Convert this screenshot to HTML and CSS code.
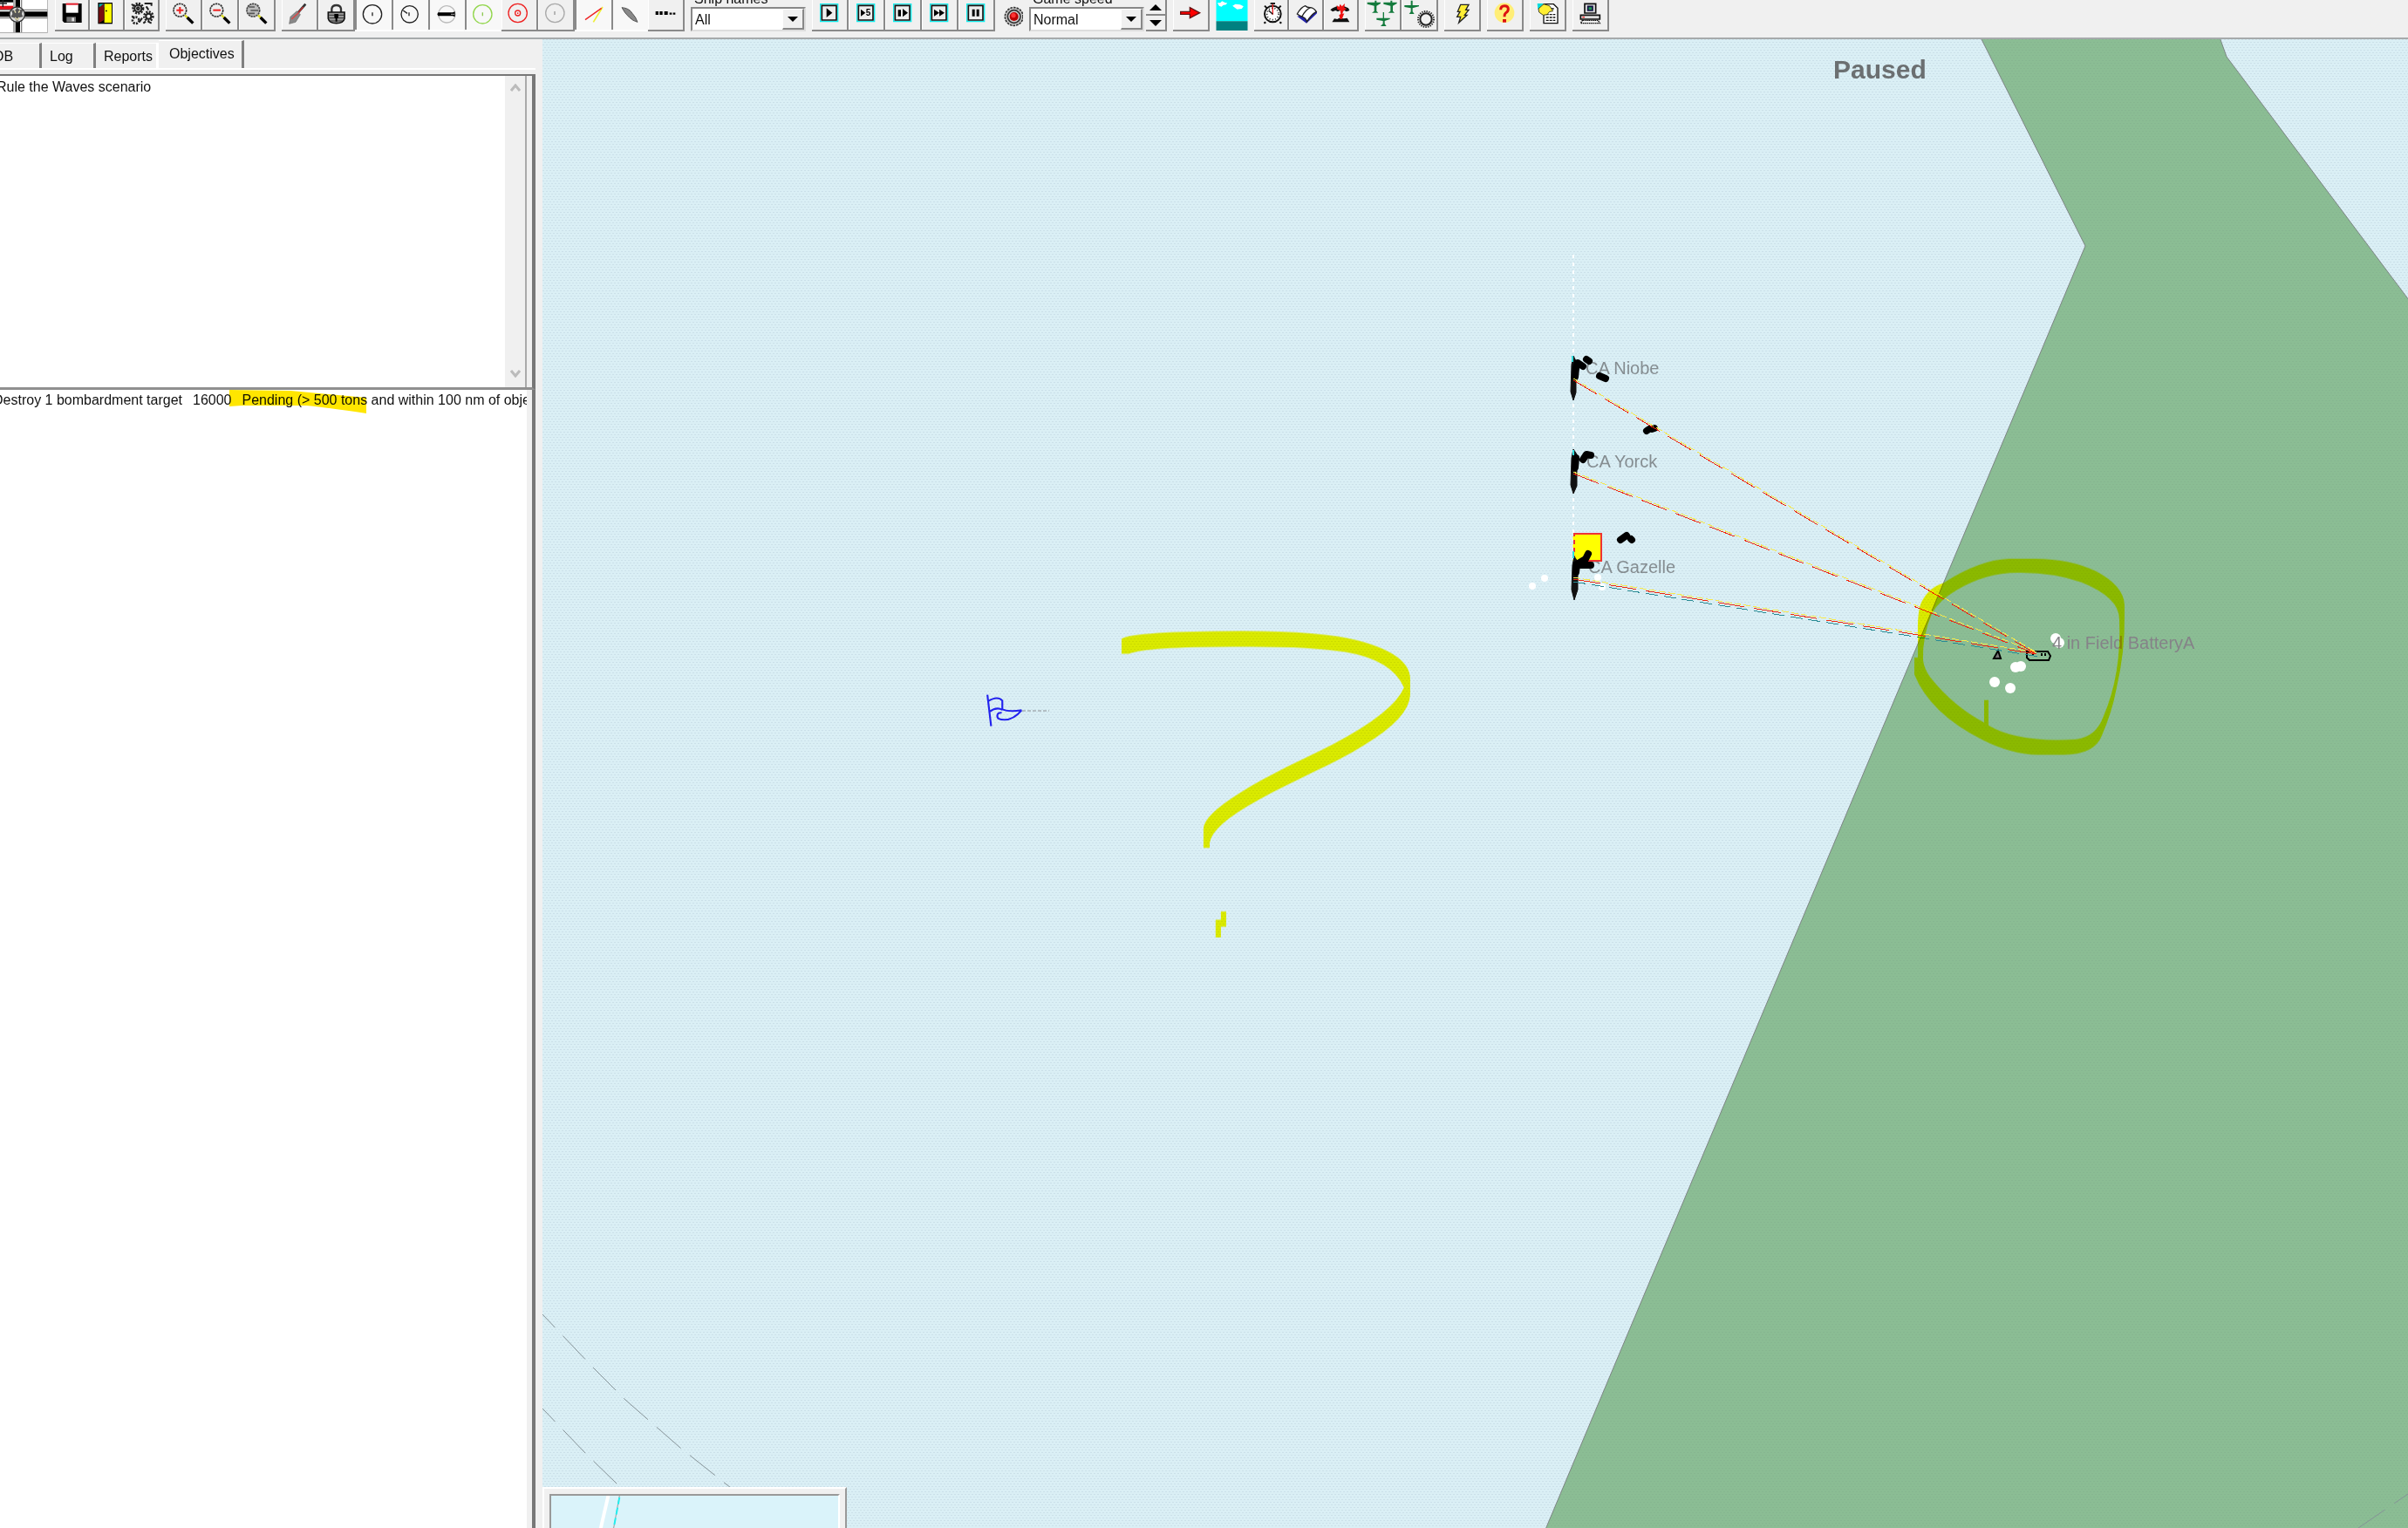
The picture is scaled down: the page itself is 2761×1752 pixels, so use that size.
FILE: index.html
```html
<!DOCTYPE html>
<html lang="en">
<head>
<meta charset="utf-8">
<title>Rule the Waves - Battle</title>
<link rel="stylesheet" href="styles.css">
</head>
<body>
<div class="app">
  <header class="toolbar">
    <svg class="ensign" viewBox="0 0 168 114" aria-hidden="true">
      <path fill="#fff" d="M0 0h164v112H0z"/><path fill="#000" d="M0 0h46v8H0z"/><path fill="#e8101a" d="M0 20h46v14H0z"/><path stroke="#222" stroke-width="4" fill="none" d="M10 0v24M0 12h24"/>
      <path fill="#888" d="M0 32h164v4H0zM0 60h164v4H0zM46 0h4v112h-4zM72 0h4v112h-4z"/><path fill="#000" d="M0 40h164v18H0zM53 0h16v112H53z"/>
      <circle cx="59" cy="50" r="26" fill="#ddd" stroke="#333" stroke-width="4"/><path fill="#555" d="M59 26l8 8 12-2-4 16 4 10-12 2-8 16-8-14-14-4 6-10-4-14 12 2z"/><path stroke="#e8e0b0" stroke-width="4" d="M50 36l4 8M68 36l-4 8M52 60l7 8 7-8" fill="none"/>
      <path fill="#999" d="M0 111h164v2H0zM163 0h2v112h-2z"/>
    </svg>
    <div class="group narrow">
      <button class="tool" aria-label="Save"><svg viewBox="0 0 120 102"><path fill="#000" d="M26 12h66v66H32l-6-6z"/><path fill="#fff" d="M38 14h42v30H38z"/><path fill="#e21c2a" d="M38 11h42v6H38z"/><path fill="#777" d="M40 58h32v18H40z"/><path fill="#ddd" d="M58 61h8v12h-8z"/></svg></button>
      <button class="tool" aria-label="Exit"><svg viewBox="0 0 120 102"><path fill="#000" d="M28 9h50v73H28z"/><path fill="#ff0" d="M50 13h25v65H50z"/><path fill="#0aa" d="M32 13h18v12H32z"/><path fill="#7a1010" d="M31 26l18-14v56l-18 12z"/><path fill="#000" d="M54 35h5v5h-5z"/></svg></button>
      <button class="tool" aria-label="Settings"><svg viewBox="0 0 120 102"><g fill="none" stroke="#222" stroke-width="8" stroke-dasharray="6 4"><circle cx="46" cy="29" r="17"/><circle cx="82" cy="56" r="15"/><circle cx="38" cy="70" r="11"/></g><g fill="none" stroke="#222" stroke-width="6"><circle cx="46" cy="29" r="12"/><circle cx="82" cy="56" r="9"/><circle cx="46" cy="29" r="4"/><path d="M24 14l8 8M68 12h24v8M74 22l8 12M50 76l10-14M64 80l8-6M80 74l12 6M24 56l10 4"/></g></svg></button>
    </div>
    <div class="group">
      <button class="tool" aria-label="Zoom in"><svg viewBox="0 0 120 102"><circle cx="49" cy="35" r="22" fill="#eee" stroke="#333" stroke-width="5" stroke-dasharray="7 2"/><path stroke="#e22" stroke-width="6" d="M37 35h24M49 24v23"/><path stroke="#dd2" stroke-width="7" d="M66 52l10 10"/><path stroke="#000" stroke-width="10" d="M74 60l20 20"/></svg></button>
      <button class="tool" aria-label="Zoom out"><svg viewBox="0 0 120 102"><circle cx="49" cy="35" r="22" fill="#eee" stroke="#333" stroke-width="5" stroke-dasharray="7 2"/><path stroke="#e22" stroke-width="6" d="M37 35h26"/><path stroke="#dd2" stroke-width="7" d="M66 52l10 10"/><path stroke="#000" stroke-width="10" d="M74 60l20 20"/></svg></button>
      <button class="tool" aria-label="Zoom to fleet"><svg viewBox="0 0 120 102"><circle cx="49" cy="35" r="22" fill="#bbb" stroke="#444" stroke-width="5" stroke-dasharray="7 2"/><path stroke="#555" stroke-width="5" d="M34 24h20M40 36h26M34 46h20"/><path stroke="#dd2" stroke-width="7" d="M66 52l10 10"/><path stroke="#000" stroke-width="10" d="M74 60l20 20"/></svg></button>
    </div>
    <div class="group">
      <button class="tool" aria-label="Clear"><svg viewBox="0 0 120 102"><path stroke="#333" stroke-width="8" d="M82 14L56 44"/><path stroke="#c33" stroke-width="4" d="M74 24L44 58"/><path fill="#888" stroke="#666" stroke-width="2" d="M52 38l12 12-16 26-22 6 4-24z"/><path stroke="#d44" stroke-width="4" d="M58 44L34 66"/></svg></button>
      <button class="tool" aria-label="Lock"><svg viewBox="0 0 120 102"><path fill="none" stroke="#333" stroke-width="7" d="M46 44V30q2-12 16-12t16 12v14"/><path fill="#999" stroke="#111" stroke-width="5" d="M34 42h56v22q-4 16-28 16T34 64z"/><path stroke="#333" stroke-width="3" d="M37 52h50M37 62h50M41 72h42"/><path fill="#000" d="M55 48h14v12l-4 4v10h-6V64l-4-4z"/></svg></button>
      <button class="tool on" aria-label="Range circle"><svg viewBox="0 0 120 102"><circle cx="60" cy="49" r="32" fill="none" stroke="#222" stroke-width="4"/><path stroke="#222" stroke-width="4" d="M60 43v12"/></svg></button>
      <button class="tool on" aria-label="Bearing circle"><svg viewBox="0 0 120 102"><circle cx="62" cy="49" r="29" fill="none" stroke="#222" stroke-width="4"/><path stroke="#222" stroke-width="4" d="M60 43v12M40 36l14 10" fill="none"/></svg></button>
      <button class="tool on" aria-label="Ship symbols"><svg viewBox="0 0 120 102"><circle cx="64" cy="49" r="29" fill="none" stroke="#bbb" stroke-width="4"/><path fill="#000" d="M34 43h50l8-3v18l-8-3H34l-3-6z"/><path stroke="#fff" stroke-width="2" d="M78 49h12"/></svg></button>
      <button class="tool on" aria-label="Sighting range"><svg viewBox="0 0 120 102"><circle cx="61" cy="49" r="32" fill="none" stroke="#92d64c" stroke-width="4"/><path stroke="#8cc850" stroke-width="4" d="M61 43v12"/></svg></button>
      <button class="tool" aria-label="Gun range"><svg viewBox="0 0 120 102"><circle cx="56" cy="45" r="32" fill="none" stroke="#e22" stroke-width="4"/><circle cx="56" cy="45" r="9" fill="none" stroke="#e22" stroke-width="4"/><path fill="#e22" d="M54 43h4v5h-4z"/></svg></button>
      <button class="tool" aria-label="Torpedo range"><svg viewBox="0 0 120 102"><circle cx="58" cy="45" r="32" fill="none" stroke="#aaa" stroke-width="4"/><path stroke="#999" stroke-width="4" d="M57 39v12"/></svg></button>
      <button class="tool on" aria-label="Fire lines"><svg viewBox="0 0 120 102"><path stroke="#ee3" stroke-width="5" d="M96 24L64 76"/><path stroke="#e22" stroke-width="4" d="M36 68L92 28"/></svg></button>
      <button class="tool on" aria-label="Torpedo"><svg viewBox="0 0 120 102"><path fill="#888" stroke="#555" stroke-width="3" d="M36 26q26 2 36 20 12 12 18 30-16-4-28-16-16-14-26-34z"/></svg></button>
      <button class="tool" aria-label="Formation"><svg viewBox="0 0 120 102"><path stroke="#000" stroke-width="12" d="M26 45h10M40 45h10M56 45h12"/><path stroke="#000" stroke-width="7" d="M74 47h8M86 47h8"/></svg></button>
    </div>
    <div class="field">
      <label for="names">Ship names</label>
      <div class="combo"><select id="names"><option>All</option></select><span class="drop"></span></div>
    </div>
    <div class="group">
      <button class="tool" aria-label="One turn"><svg viewBox="0 0 120 102"><path fill="#eee" stroke="#1ee" stroke-width="4" d="M29 14h60v60H29z"/><path fill="none" stroke="#111" stroke-width="5" d="M34 19h50v50H34z"/><path fill="#000" d="M50 28l20 16-20 16z"/></svg></button>
      <button class="tool" aria-label="Five turns"><svg viewBox="0 0 120 102"><path fill="#eee" stroke="#1ee" stroke-width="4" d="M29 14h60v60H29z"/><path fill="none" stroke="#111" stroke-width="5" d="M34 19h50v50H34z"/><path fill="#000" d="M42 32l16 12-16 12z"/><text x="59" y="55" class="five">5</text></svg></button>
      <button class="tool" aria-label="Step"><svg viewBox="0 0 120 102"><path fill="#eee" stroke="#1ee" stroke-width="4" d="M29 14h60v60H29z"/><path fill="none" stroke="#111" stroke-width="5" d="M34 19h50v50H34z"/><path fill="#000" d="M44 34h10v22H44zM60 30l18 14-18 14z"/></svg></button>
      <button class="tool" aria-label="Fast forward"><svg viewBox="0 0 120 102"><path fill="#eee" stroke="#1ee" stroke-width="4" d="M29 14h60v60H29z"/><path fill="none" stroke="#111" stroke-width="5" d="M34 19h50v50H34z"/><path fill="#000" d="M42 32l18 12-18 12zM60 32l18 12-18 12z"/></svg></button>
      <button class="tool" aria-label="Pause"><svg viewBox="0 0 120 102"><path fill="#eee" stroke="#1ee" stroke-width="4" d="M29 14h60v60H29z"/><path fill="none" stroke="#111" stroke-width="5" d="M34 19h50v50H34z"/><path fill="#000" d="M47 32h9v24h-9zM62 32h9v24h-9z"/></svg></button>
    </div>
    <svg class="lamp" viewBox="0 0 75 102" aria-hidden="true"><circle cx="44" cy="57" r="31" fill="#ccc" stroke="#333" stroke-width="5" stroke-dasharray="8 3"/><circle cx="44" cy="57" r="22" fill="none" stroke="#333" stroke-width="5"/><circle cx="44" cy="57" r="15" fill="#b00"/><circle cx="42" cy="53" r="8" fill="#f33"/></svg>
    <div class="speed">
      <div class="field">
        <label for="speed">Game speed</label>
        <div class="combo"><select id="speed"><option>Normal</option></select><span class="drop"></span></div>
      </div>
      <div class="spin"><button class="up" aria-label="Faster"></button><button class="down" aria-label="Slower"></button></div>
    </div>
    <div class="group">
      <button class="tool" aria-label="Go"><svg viewBox="0 0 120 102"><path fill="#f00" stroke="#611" stroke-width="4" d="M26 40h32V26l34 18-34 18V49H26z"/></svg></button>
    </div>
    <svg class="sky" viewBox="0 0 108 105" aria-hidden="true"><path fill="#0ff" d="M0 0h108v73H0z"/><path fill="#008080" d="M0 73h108v32H0z"/><path fill="#fff" d="M4 10h10l6-6 12 6h6l-4 6-10 2-6 5-8-3zM56 20l10-6 16 2 12 6-6 8-16 2z"/></svg>
    <div class="group narrow">
      <button class="tool" aria-label="Time"><svg viewBox="0 0 120 102"><circle cx="64" cy="48" r="28" fill="#fff" stroke="#111" stroke-width="6"/><circle cx="64" cy="48" r="20" fill="none" stroke="#111" stroke-width="5" stroke-dasharray="3 7"/><path stroke="#111" stroke-width="6" d="M56 12h16M36 20l8 8M92 20l-8 8M40 76l-6 4M88 76l6 4"/><path stroke="#e22" stroke-width="4" d="M64 14v36"/><path stroke="#111" stroke-width="4" d="M64 49L50 36"/></svg></button>
      <button class="tool" aria-label="Log book"><svg viewBox="0 0 120 102"><path fill="#22a" d="M28 56l32 24 36-34v-6z"/><path fill="#fff" stroke="#222" stroke-width="4" d="M28 48q14-24 28-28 6 6 16 6 12 0 22 14-18 10-32 34-6-14-16-16-10-4-18-10zM44 58q12-24 30-32"/></svg></button>
      <button class="tool" aria-label="Damage"><svg viewBox="0 0 120 102"><path fill="#111" d="M22 34l8-6 14-6 12 4 14-4 14 6 4 8-10 4-8-4-8 4-6-4-8 4-8-4-10 4zM28 76l8-12 10 2 6-4 16 2 12-2 8 14z"/><path fill="#e11" d="M44 18l8 6 4-10 6 8 10-10-2 14 8 4-12 8-2 10 6-2-8 20h-6l-4-14 6-4-2-12-10-4z"/></svg></button>
    </div>
    <div class="group">
      <button class="tool" aria-label="Air group"><svg viewBox="0 0 120 102"><path fill="#137a3c" d="M8 8h26V2h6v6h14v4L40 20v18l6 6H24l8-6V20L8 14zM64 8h24V2h6v6h16v4L96 20v18l6 6H80l8-6V20L64 14zM40 62h22V42h4v20h20v4L68 72v10l6 8H54l8-8V72L40 68z"/></svg></button>
      <button class="tool" aria-label="Air settings"><svg viewBox="0 0 120 102"><path fill="#137a3c" d="M10 18h22V2h6v16h22v4L38 28v12l6 8H26l6-8V28L10 24z"/><circle cx="84" cy="66" r="20" fill="none" stroke="#222" stroke-width="6"/><circle cx="84" cy="66" r="27" fill="none" stroke="#222" stroke-width="6" stroke-dasharray="4 4"/></svg></button>
    </div>
    <div class="group"><button class="tool" aria-label="Quick"><svg viewBox="0 0 120 102"><path fill="#fe3" stroke="#222" stroke-width="4" d="M56 16h28L74 34h10L70 52h8L50 78l6-20H44l10-18H46z"/></svg></button></div>
    <div class="group"><button class="tool" aria-label="Help"><svg viewBox="0 0 120 102"><circle cx="60" cy="44" r="34" fill="#fe7"/><path fill="none" stroke="#d11" stroke-width="9" d="M47 34q0-14 13-14t13 11q0 9-9 14-4 3-4 13"/><path fill="#d11" d="M54 66h12v11H54z"/></svg></button></div>
    <div class="group"><button class="tool" aria-label="Orders"><svg viewBox="0 0 120 102"><path fill="#fff" stroke="#111" stroke-width="4" d="M48 14h34l14 14v52H48z"/><path stroke="#111" stroke-width="4" d="M56 50h32M56 60h32M56 70h32M74 30h10" stroke-dasharray="9 3"/><path fill="#0dd" d="M26 12h22L28 32z"/><path fill="#fe3" stroke="#442" stroke-width="3" d="M30 30l18-16 20 6 12 18-12 2-8 10-14 2-14-10z"/></svg></button></div>
    <div class="group"><button class="tool" aria-label="Computer"><svg viewBox="0 0 120 102"><path fill="#ddd" stroke="#111" stroke-width="5" d="M42 13h38v32H42zM28 52h66v14H28z"/><path fill="#295" stroke="#114" stroke-width="5" d="M53 22h16v14H53z"/><path fill="#e22" d="M34 57h8v4h-8z"/><path fill="#eee" stroke="#111" stroke-width="4" d="M34 70h54l6 10H28z" stroke-dasharray="5 2"/></svg></button></div>
  </header>

  <main class="work">
    <aside class="side">
      <nav class="tabs">
        <button class="tab cut">OB</button>
        <button class="tab log">Log</button>
        <button class="tab reports">Reports</button>
        <button class="tab active">Objectives</button>
      </nav>
      <section class="memo">
        <p class="memo-text">Rule the Waves scenario</p>
        <div class="scroll">
          <svg viewBox="0 0 12 10"><path d="M1 8l5-6 5 6"/></svg>
          <svg viewBox="0 0 12 10"><path d="M1 2l5 6 5-6"/></svg>
        </div>
      </section>
      <section class="goals">
        <p class="goal"><span>Destroy 1 bombardment target</span><span>16000</span><span>Pending (&gt; 500 tons and within 100 nm of objectives)</span></p>
        <svg class="marker" viewBox="0 0 158 28"><path d="M0 0L70 1 157 9V27Q110 20 88 18H14L0 19z"/></svg>
      </section>
    </aside>

    <section class="map">
      <svg class="chart" viewBox="622 45 2139 1707" preserveAspectRatio="xMinYMin slice">
        <defs>
          <pattern id="sea" width="4" height="6" patternUnits="userSpaceOnUse"><rect width="4" height="6" fill="#daeff5"/><path fill="#cbe0e9" d="M0 0h2v1H0zM2 3h2v1H2z"/></pattern>
          <pattern id="land" width="4" height="6" patternUnits="userSpaceOnUse"><rect width="4" height="6" fill="#8bbd94"/><path fill="#86b690" d="M0 0h2v1H0zM2 3h2v1H2z"/></pattern>
        </defs>
        <rect x="622" y="45" width="2139" height="1707" fill="url(#sea)"/>
        <path class="coast" fill="url(#land)" d="M2272 40V45L2391 282 1771 1756H2765V348L2553 65 2544 40z"/>
        <g class="route">
          <path stroke-dashoffset="16" d="M622 1507L680 1568 717 1605 780 1660 838 1706"/>
          <path stroke-dashoffset="16" d="M622 1615L672 1667 708 1702"/>
          <path d="M2704 1752L2761 1713"/>
        </g>

        <path class="wake" d="M1804 292V630"/>
        <g class="label">
          <text x="1818" y="429">CA Niobe</text>
          <text x="1819" y="536">CA Yorck</text>
          <text x="1821" y="657">CA Gazelle</text>
        </g>
        <path fill="#ff0" stroke="#e33" stroke-width="2" d="M1805 612h31v31h-31z"/>
        <path stroke="#ff0" stroke-width="3" stroke-dasharray="4 5" d="M1805 615v28"/>
        <g class="hull">
          <path d="M1802 418l2-10 3 6v36l-3 9-3-10z"/><path d="M1802 525l2-10 4 6v36l-4 9-3-10z"/><path d="M1803 648l2-10 4 6v32l-4 12-3-12z"/>
        </g>
        <g class="smoke">
          <path d="M1806 432l1-10 2-6 6 4M1819 412l3 2M1834 431l7 3M1888 494l3-2M1894 492l3-1"/>
          <path d="M1806 536l1-11M1815 527l4-6 5 1"/>
          <path d="M1807 656l1-9 10-6 3-6M1810 648l14 0M1858 619l7-5M1870 618l1 1"/>
        </g>
        <path stroke="#3dd" stroke-width="2" d="M1803 408v7M1804 516v6M1804 632v8"/>
        <g class="splash">
          <circle cx="1757" cy="672" r="4"/><circle cx="1771" cy="663" r="4"/><circle cx="1832" cy="662" r="4"/><circle cx="1837" cy="673" r="4"/>
          <circle cx="2357" cy="732" r="6"/><circle cx="2361" cy="737" r="6"/><circle cx="2311" cy="765" r="6"/><circle cx="2317" cy="764" r="6"/><circle cx="2287" cy="782" r="6"/><circle cx="2305" cy="789" r="6"/>
        </g>
        <path class="battery" d="M2324 747h24l3 5-2 5h-22l-3-3z"/><path stroke="#000" stroke-width="2" d="M2331 749v3M2341 749v3M2345 749v3"/>
        <path fill="#777" stroke="#000" stroke-width="2" d="M2291 746l3 9h-8z"/>
        <g class="label"><text class="foe" x="2353" y="744">4 in Field BatteryA</text></g>
        <g class="fire">
          <path class="teal" d="M1804 667L2338 753"/>
          <path class="gold" d="M1804 434L2335 748M1804 541L2335 748M1804 662L2335 748"/>
          <path class="red" d="M1804 436L2335 750M1804 543L2335 750M1804 664L2335 750"/>
        </g>

        <g class="ink">
          <path transform="translate(2160 600) scale(.3333)" fill-rule="evenodd" d="M205 205Q330 125 430 122H520Q640 122 730 165 825 215 828 280V320Q830 440 800 570 785 650 750 730 725 795 620 796H530Q440 795 340 745 160 655 105 520V462H117V380Q115 300 130 270 155 220 205 205ZM135 470Q132 390 165 310 190 265 250 230 350 170 460 170 580 168 680 203 810 255 810 330 818 520 755 665 730 735 660 743 460 755 360 695V608H345V685Q240 630 160 530 138 500 135 470Z"/>
          <path transform="translate(1100 700) scale(.357 .3333)" d="M521 97Q560 72 900 71 1160 70 1280 103 1447 150 1448 235V290Q1445 370 1300 463C1200 530 1080 580 960 652Q810 740 804 800V816H784V750Q785 705 900 628C1000 560 1100 515 1200 460Q1395 350 1428 265 1390 170 1240 143 1120 122 880 125 600 125 545 149H521ZM840 1035H857V1088H840V1125H823V1064H840Z"/>
        </g>
        <path class="trail" d="M1172 815h31"/>
        <path class="flag" transform="translate(1100 700) scale(.357 .3333)" d="M90 290L102 398M93 312Q122 292 138 310V340Q160 350 200 343M97 348Q120 330 138 342M200 343Q175 375 145 376 120 376 122 362 122 350 136 352"/>
        <text class="state" x="2102" y="90">Paused</text>
      </svg>
      <div class="overview"><svg viewBox="0 0 332 39" preserveAspectRatio="xMinYMin slice"><path stroke="#fff" stroke-width="4" d="M66 0L57 39"/><path stroke="#999" stroke-width="1" d="M79 0L72 39"/><path stroke="#2ee" stroke-width="2" stroke-dasharray="8 4" d="M79 2L72 39"/></svg></div>
    </section>
  </main>
</div>
</body>
</html>
```
FILE: styles.css
```css
* { box-sizing: border-box; }
body { margin: 0; background: #f0f0f0; color: #111; font: 16px/18px "Liberation Sans", Arial, sans-serif; }
button { font: inherit; color: inherit; padding: 0; border: 0; background: #f0f0f0; }
.app { display: flex; flex-direction: column; height: 100vh; overflow: hidden; }

.toolbar { display: flex; align-items: flex-start; gap: 7px; height: 45px; flex: none; border-bottom: 2px solid #a6aaab; overflow: hidden; }
.toolbar > * { flex: none; }
.ensign { width: 56px; height: 38px; }
.group { display: flex; }
.tool { width: 42px; height: 36px; border-right: 2px solid #8a8a8a; border-bottom: 2px solid #8a8a8a; box-shadow: inset 1px 0 #fff; }
.narrow .tool { width: 40px; }
.tool svg { display: block; width: 40px; height: 34px; overflow: visible; fill: none; }
.tool.on { background: #f8f8f8; border-right-color: #f8f8f8; border-bottom-color: #fff; box-shadow: inset 2px 0 #8a8a8a; }
.five { font: bold 30px "Liberation Sans", Arial, sans-serif; fill: #000; }

.field { width: 132px; }
.field label { display: block; margin: -10px 0 0 4px; height: 18px; line-height: 18px; }
.combo { display: flex; height: 28px; background: #fff; border: 2px solid #888; border-right-color: #ddd; border-bottom-color: #ddd; }
.combo select { flex: 1; min-width: 0; appearance: none; border: 0; background: #fff; font: inherit; color: inherit; padding: 2px 0 0 3px; }
.drop { width: 25px; display: grid; place-items: center; background: #f0f0f0; border: 1px solid #fff; border-right: 2px solid #888; border-bottom: 2px solid #888; }
.drop::after { content: ""; border: 6px solid transparent; border-top-color: #000; border-bottom: 0; }
.lamp { width: 25px; height: 34px; }
.speed { display: flex; gap: 2px; }
.spin { display: flex; flex-direction: column; width: 24px; height: 36px; }
.spin button { height: 18px; display: flex; align-items: center; justify-content: center; border-right: 2px solid #888; border-bottom: 2px solid #888; }
.spin button::after { content: ""; width: 0; height: 0; border-left: 7px solid transparent; border-right: 7px solid transparent; }
.spin .up::after { border-bottom: 7px solid #000; }
.spin .down::after { border-top: 7px solid #000; }
.sky { width: 37px; height: 35px; }

.work { display: flex; flex: 1; min-height: 0; }
.side { display: flex; flex-direction: column; width: 622px; flex: none; border-right: 8px solid #f0f0f0; }
.tabs { display: flex; align-items: flex-end; height: 35px; border-bottom: 2px solid #fff; }
.tab { height: 29px; padding-top: 1px; text-align: left; border-right: 3px solid #808080; border-top: 1px solid #fff; }
.cut { width: 48px; text-indent: -8px; }
.log { width: 62px; padding-left: 9px; }
.reports { width: 72px; padding-left: 9px; border-right-color: #fff; }
.tab.active { width: 98px; height: 32px; padding: 0 0 2px 12px; }
.memo { display: flex; height: 362px; margin-top: 5px; background: #fff; border-top: 2px solid #777; border-bottom: 3px solid #909090; border-right: 4px solid #777; box-shadow: inset -6px 0 #f0f0f0, inset -8px 0 #aaa; }
.memo-text { flex: 1; margin: 4px 0 0 -4px; }
.scroll { width: 23px; margin-right: 8px; background: #f0f0f0; display: flex; flex-direction: column; justify-content: space-between; align-items: center; padding: 9px 0 11px; }
.scroll svg { width: 12px; height: 10px; fill: none; stroke: #bbb; stroke-width: 3; }
.goals { position: relative; flex: 1; background: #fff; border-right: 4px solid #777; box-shadow: inset -6px 0 #f0f0f0; }
.goal { display: flex; gap: 12px; margin: 0 6px 0 -8px; padding-top: 3px; white-space: nowrap; overflow: hidden; }
.marker { position: absolute; left: 263px; top: 0; width: 158px; height: 28px; fill: #ffe600; mix-blend-mode: multiply; }

.map { position: relative; flex: 1; min-width: 0; overflow: hidden; background: #d9edf4; }
.chart { display: block; width: 100%; height: 100%; }
.coast { stroke: #7d8584; stroke-width: 1; }
.route { fill: none; stroke: #859297; stroke-width: 1; stroke-dasharray: 37 13; }
.wake { stroke: #fff; stroke-width: 2; stroke-dasharray: 4 5; }
.label { font-size: 20px; fill: #858d91; }
.foe { fill: #858388; }
.hull { fill: #111; stroke: #111; }
.smoke { fill: none; stroke: #000; stroke-width: 8; stroke-linecap: round; stroke-linejoin: round; }
.splash { fill: #fff; }
.battery { fill: none; stroke: #000; stroke-width: 2; }
.fire { fill: none; stroke-width: 2; shape-rendering: crispEdges; }
.gold { stroke: #f7e84a; stroke-width: 1; stroke-dasharray: 8 3; }
.red { stroke: #ee2a10; stroke-width: 1; stroke-dasharray: 31 11; }
.teal { stroke: #2a8a94; stroke-width: 1; stroke-dasharray: 14 7; }
.ink { fill: #fffa00; mix-blend-mode: multiply; }
.trail { stroke: #b3bfc4; stroke-width: 2; stroke-dasharray: 4 2; }
.flag { fill: none; stroke: #2222ee; stroke-width: 6; }
.state { font-size: 30px; font-weight: bold; fill: #6b6f71; }
.overview { position: absolute; left: 0; bottom: 0; width: 349px; height: 47px; padding: 6px 6px 0; background: #f0f0f0; border: 2px solid #fff; border-right-color: #999; border-bottom: 0; }
.overview svg { display: block; width: 100%; height: 39px; background: #daf3fa; border: 2px solid #999; border-right-color: #fff; border-bottom: 0; }
```
